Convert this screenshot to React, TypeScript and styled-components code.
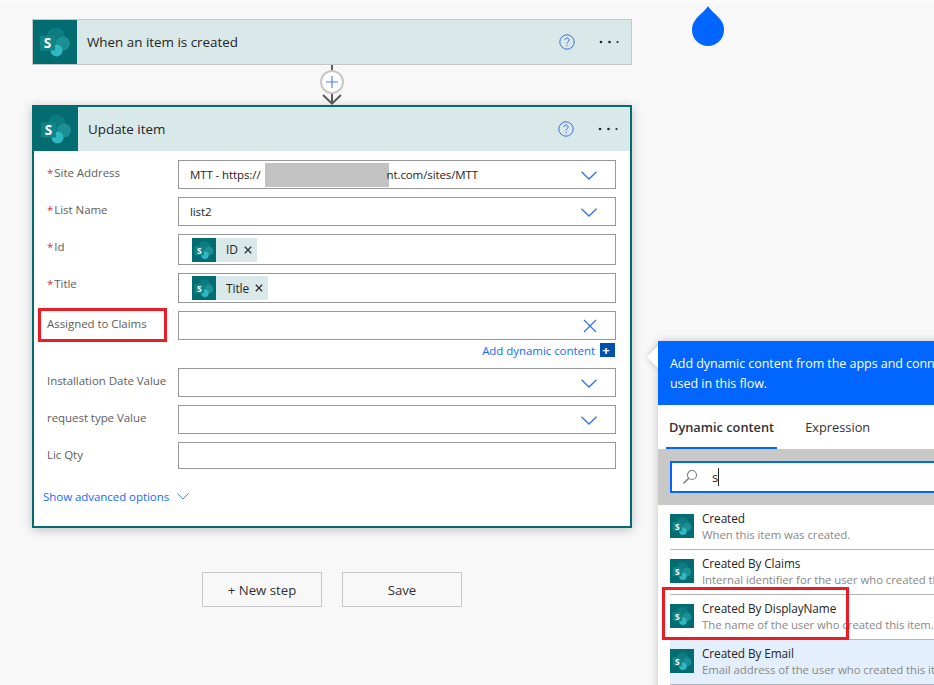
import React from "react";
import styled, { createGlobalStyle } from "styled-components";

const Global = createGlobalStyle`
  html, body { margin: 0; padding: 0; height: 685px; overflow: hidden; background: #f8f8f8; }
  * { box-sizing: border-box; }
  body { font-family: "Open Sans", "Noto Sans", "Liberation Sans", sans-serif; }
`;

const Page = styled.div`
  position: relative;
  width: 934px;
  height: 685px;
  overflow: hidden;
  background: #f8f8f8;
  border-top: 3px solid #fbfbfb;
  padding: 16px 0 0 32px;
`;
const Canvas = styled.div`
  width: 600px;
  display: flex;
  flex-direction: column;
  align-items: center;
`;
const TriggerCard = styled.div`
  width: 100%;
  height: 46px;
  display: flex;
  align-items: stretch;
  border: 1px solid #c4c8c8;
  background: #d9e8e8;
`;
const UpdateCard = styled.div`
  width: 100%;
  height: 423px;
  background: #fff;
  border: 2px solid #036c70;
  box-shadow: 0 2px 10px rgba(0, 0, 0, 0.22);
  display: flex;
  flex-direction: column;
`;
const Header = styled.div`
  height: 44px;
  flex: none;
  display: flex;
  align-items: stretch;
  background: #d9e8e8;
`;
const LogoCell = styled.div`
  width: 44px;
  flex: none;
  background: #036c70;
  display: flex;
  align-items: center;
  justify-content: center;
`;
const HeaderTitle = styled.div`
  flex: 1;
  align-self: center;
  margin-left: 10px;
  font-size: 13.4px;
  color: #252423;
`;
const HeaderActions = styled.div`
  display: flex;
  align-items: center;
  gap: 24px;
  padding-right: 12px;
`;
const Connector = styled.div`
  height: 40px;
  width: 30px;
  display: flex;
  flex-direction: column;
  align-items: center;
`;
const ConnectorStem = styled.div`
  width: 2px;
  height: 5px;
  background: #605e5c;
`;
const PlusCircle = styled.div`
  width: 24px;
  height: 24px;
  border-radius: 50%;
  background: #fff;
  border: 2px solid #c8c8c8;
  display: flex;
  align-items: center;
  justify-content: center;
`;
const FormBody = styled.div`
  flex: 1;
  padding: 9px 14px 0 13px;
  display: flex;
  flex-direction: column;
`;
const Row = styled.div<{ $gap?: number }>`
  display: grid;
  grid-template-columns: 131px 438px;
  margin-bottom: ${(p) => p.$gap ?? 8}px;
`;
const Label = styled.div<{ $top?: number }>`
  font-size: 11.5px;
  color: #605e5c;
  padding-top: ${(p) => p.$top ?? 5}px;
  line-height: 16px;
  white-space: nowrap;
  letter-spacing: -0.05px;
`;
const Star = styled.span`
  color: #d13438;
  margin-right: 1px;
`;
const Box = styled.div<{ $h: number }>`
  height: ${(p) => p.$h}px;
  border: 1px solid #979797;
  background: #fff;
  display: flex;
  align-items: center;
  justify-content: space-between;
  padding: 0 18px 0 11px;
  font-size: 11.5px;
  color: #252423;
  letter-spacing: -0.1px;
`;
const BoxValue = styled.span`
  display: inline-flex;
  align-items: center;
  white-space: nowrap;
`;
const Redact = styled.span`
  display: inline-block;
  width: 124px;
  height: 24px;
  margin: 0 -2px 0 4px;
  background: #c2c2c2;
`;
const ChevronSlot = styled.span`
  display: inline-flex;
  padding-top: 2px;
`;
const Token = styled.div`
  height: 24px;
  margin-left: 2px;
  display: inline-flex;
  align-items: center;
  background: #d9e8e8;
  font-size: 12px;
  color: #252423;
`;
const TokenIcon = styled.div`
  width: 24px;
  height: 24px;
  background: #036c70;
  display: flex;
  align-items: center;
  justify-content: center;
`;
const TokenText = styled.span`
  margin-left: 10px;
`;
const TokenClose = styled.span`
  margin: 0 5px 0 6px;
  display: inline-flex;
`;
const AddLine = styled.div`
  display: flex;
  justify-content: flex-end;
  align-items: center;
  gap: 5px;
  height: 14px;
  margin: 3px 0 11px;
  width: 569px;
`;
const LinkText = styled.span`
  font-size: 11.5px;
  color: #0f6cff;
  letter-spacing: -0.05px;
  white-space: nowrap;
`;
const AddBadge = styled.div`
  width: 16px;
  height: 14px;
  background: #0050ac;
  display: flex;
  align-items: center;
  justify-content: center;
  padding-right: 3px;
  border-right: 1px solid #fff;
  color: #fff;
  font-size: 13px;
  font-weight: 700;
  line-height: 14px;
`;
const Advanced = styled.div`
  display: flex;
  align-items: center;
  gap: 8px;
  margin: 20px 0 0 -4px;
`;
const Buttons = styled.div`
  display: flex;
  gap: 20px;
  margin-top: 44px;
`;
const StepButton = styled.div`
  width: 120px;
  height: 35px;
  border: 1px solid #c8c8c8;
  background: #f8f8f8;
  display: flex;
  align-items: center;
  justify-content: center;
  padding-top: 1px;
  font-size: 13.2px;
  color: #323130;
`;
const Drop = styled.svg`
  position: absolute;
  left: 692px;
  top: 3px;
`;
const Highlight = styled.div<{ $l: number; $t: number; $w: number; $h: number }>`
  position: absolute;
  z-index: 2;
  left: ${(p) => p.$l}px;
  top: ${(p) => p.$t}px;
  width: ${(p) => p.$w}px;
  height: ${(p) => p.$h}px;
  border: 3px solid #ed1c24;
  pointer-events: none;
`;
const Panel = styled.div`
  position: absolute;
  z-index: 1;
  left: 658px;
  top: 338px;
  width: 345px;
  height: 360px;
  background: #fff;
  box-shadow: 0 0 8px rgba(0, 0, 0, 0.22);
`;
const PanelArrow = styled.div`
  position: absolute;
  z-index: -1;
  left: -8px;
  top: 8px;
  width: 16px;
  height: 16px;
  background: #fff;
  transform: rotate(45deg);
  box-shadow: 0 0 6px rgba(0, 0, 0, 0.2);
`;
const PanelBanner = styled.div`
  height: 64px;
  background: #0066ff;
  color: #fff;
  font-size: 12.5px;
  line-height: 20px;
  padding: 13px 30px 0 12px;
  letter-spacing: -0.05px;
`;
const Tabs = styled.div`
  height: 44px;
  display: flex;
  background: #fff;
  padding-left: 8px;
  gap: 25px;
`;
const Tab = styled.div<{ $active?: boolean }>`
  height: 44px;
  padding: 13px 3px 0;
  font-size: 12.8px;
  font-weight: ${(p) => (p.$active ? 600 : 400)};
  color: #323130;
  border-bottom: 2px solid ${(p) => (p.$active ? "#0066ff" : "transparent")};
  white-space: nowrap;
`;
const SearchArea = styled.div`
  height: 56px;
  background: #c8c9c7;
  padding: 12px 0 0 12px;
`;
const SearchInput = styled.div`
  height: 32px;
  background: #fff;
  border: 2px solid #0066ff;
  display: flex;
  align-items: center;
  padding-left: 10px;
  font-size: 13px;
  color: #252423;
`;
const SearchText = styled.span`
  margin-left: 14px;
  border-right: 1px solid #252423;
  height: 18px;
  line-height: 18px;
`;
const List = styled.div`
  padding-left: 12px;
  background: #fff;
`;
const Item = styled.div<{ $hover?: boolean }>`
  height: 45px;
  display: flex;
  gap: 8px;
  padding-top: 9px;
  border-bottom: 1px solid #b5b5b5;
  background: ${(p) => (p.$hover ? "#e3effc" : "#fff")};
`;
const ItemIcon = styled.div`
  width: 24px;
  height: 24px;
  flex: none;
  background: #036c70;
  display: flex;
  align-items: center;
  justify-content: center;
`;
const ItemText = styled.div`
  display: flex;
  flex-direction: column;
  gap: 1px;
  white-space: nowrap;
  margin-top: -4px;
`;
const ItemTitle = styled.div`
  font-size: 11.8px;
  line-height: 16px;
  color: #252423;
  letter-spacing: -0.08px;
`;
const ItemDesc = styled.div`
  font-size: 11.4px;
  line-height: 16px;
  color: #8a8886;
  letter-spacing: -0.06px;
`;

const SpLogo = ({ size }: { size: number }) => (
  <svg width={size} height={size} viewBox="0 0 32 32">
    <circle cx="17" cy="10.5" r="9" fill="#0c7c80" />
    <circle cx="24" cy="17.5" r="7" fill="#1a8f94" />
    <circle cx="17.5" cy="24.5" r="6" fill="#2fb8c2" />
    <rect x="1" y="9.5" width="15" height="15" rx="1" fill="#118488" />
    <text x="8.5" y="22" textAnchor="middle" fontSize="13.5" fontWeight="700" fill="#fff" fontFamily="Open Sans, sans-serif">S</text>
  </svg>
);
const Help = () => (
  <svg width="16" height="16" viewBox="0 0 16 16" fill="none" stroke="#3f6fe8" strokeWidth="1">
    <circle cx="8" cy="8" r="7.2" />
    <path d="M5.9 6.1c0-1.3 1-2.1 2.1-2.1s2.1.8 2.1 2c0 1.900-2.100 1.700-2.100 3.700" />
    <path d="M8 11v1.200" />
  </svg>
);
const More = () => (
  <svg width="20" height="4" viewBox="0 0 20 4" fill="#252423">
    <circle cx="2" cy="2" r="1.300" />
    <circle cx="10.500" cy="2" r="1.300" />
    <circle cx="18.500" cy="2" r="1.100" />
  </svg>
);
const Chevron = () => (
  <ChevronSlot>
    <svg width="16" height="9" viewBox="0 0 16 9" fill="none" stroke="#2f6fe8" strokeWidth="1.300">
      <path d="M.5 .8 8 8 15.500 .8" />
    </svg>
  </ChevronSlot>
);
const SmallChevron = () => (
  <svg width="12" height="7" viewBox="0 0 12 7" fill="none" stroke="#3f7cf0" strokeWidth="1">
    <path d="M.5 .5 6 6 11.500 .5" />
  </svg>
);
const Cross = () => (
  <svg width="14" height="14" viewBox="0 0 14 14" fill="none" stroke="#2f6fe8" strokeWidth="1.200">
    <path d="M1 1 13 13M13 1 1 13" />
  </svg>
);
const TokenX = () => (
  <svg width="8" height="8" viewBox="0 0 8 8" fill="none" stroke="#323130" strokeWidth="1.300">
    <path d="M.8 .8 7.200 7.200M7.200 .8 .8 7.200" />
  </svg>
);
const SearchIcon = () => (
  <svg width="16" height="16" viewBox="0 0 16 16" fill="none" stroke="#7a7a7a" strokeWidth="1.100">
    <circle cx="10" cy="6" r="4.500" />
    <path d="M6.800 9.200 1.500 14.500" strokeWidth="1.500" />
  </svg>
);

const items = [
  ["Created", "When this item was created."],
  ["Created By Claims", "Internal identifier for the user who created this item."],
  ["Created By DisplayName", "The name of the user who created this item."],
  ["Created By Email", "Email address of the user who created this item."],
];

export default function App() {
  return (
    <Page>
      <Global />
      <Canvas>
        <TriggerCard>
          <LogoCell><SpLogo size={32} /></LogoCell>
          <HeaderTitle>When an item is created</HeaderTitle>
          <HeaderActions><Help /><More /></HeaderActions>
        </TriggerCard>
        <Connector>
          <ConnectorStem />
          <PlusCircle>
            <svg width="14" height="14" viewBox="0 0 14 14" stroke="#4f86e8" strokeWidth="1.200">
              <path d="M7 1v12M1 7h12" />
            </svg>
          </PlusCircle>
          <svg width="20" height="11" viewBox="0 0 20 11" fill="none" stroke="#5c5c5c" strokeWidth="2">
            <path d="M1 1 10 9.500 19 1M10 0v9" />
          </svg>
        </Connector>
        <UpdateCard>
          <Header>
            <LogoCell><SpLogo size={32} /></LogoCell>
            <HeaderTitle>Update item</HeaderTitle>
            <HeaderActions><Help /><More /></HeaderActions>
          </Header>
          <FormBody>
            <Row>
              <Label><Star>*</Star>Site Address</Label>
              <Box $h={29}>
                <BoxValue>MTT - https://<Redact />nt.com/sites/MTT</BoxValue>
                <Chevron />
              </Box>
            </Row>
            <Row>
              <Label><Star>*</Star>List Name</Label>
              <Box $h={29}><BoxValue>list2</BoxValue><Chevron /></Box>
            </Row>
            <Row>
              <Label><Star>*</Star>Id</Label>
              <Box $h={31}>
                <Token>
                  <TokenIcon><SpLogo size={20} /></TokenIcon>
                  <TokenText>ID</TokenText>
                  <TokenClose><TokenX /></TokenClose>
                </Token>
              </Box>
            </Row>
            <Row>
              <Label $top={3}><Star>*</Star>Title</Label>
              <Box $h={30}>
                <Token>
                  <TokenIcon><SpLogo size={20} /></TokenIcon>
                  <TokenText>Title</TokenText>
                  <TokenClose><TokenX /></TokenClose>
                </Token>
              </Box>
            </Row>
            <Row $gap={0}>
              <Label>Assigned to Claims</Label>
              <Box $h={29}><span /><Cross /></Box>
            </Row>
            <AddLine>
              <LinkText>Add dynamic content</LinkText>
              <AddBadge>+</AddBadge>
            </AddLine>
            <Row>
              <Label>Installation Date Value</Label>
              <Box $h={29}><span /><Chevron /></Box>
            </Row>
            <Row>
              <Label>request type Value</Label>
              <Box $h={29}><span /><Chevron /></Box>
            </Row>
            <Row $gap={0}>
              <Label>Lic Qty</Label>
              <Box $h={27} />
            </Row>
            <Advanced>
              <LinkText>Show advanced options</LinkText>
              <SmallChevron />
            </Advanced>
          </FormBody>
        </UpdateCard>
        <Buttons>
          <StepButton>+ New step</StepButton>
          <StepButton>Save</StepButton>
        </Buttons>
      </Canvas>
      <Drop width="32" height="40" viewBox="0 0 32 40">
        <path d="M16 0 C18 4 24 8 28 13 C31 16.500 32 20 32 24 A16 16 0 0 1 0 24 C0 20 1 16.500 4 13 C8 8 14 4 16 0Z" fill="#0066ff" />
      </Drop>
      <Panel>
        <PanelArrow />
        <PanelBanner>Add dynamic content from the apps and connectors used in this flow.</PanelBanner>
        <Tabs>
          <Tab $active>Dynamic content</Tab>
          <Tab>Expression</Tab>
        </Tabs>
        <SearchArea>
          <SearchInput>
            <SearchIcon />
            <SearchText>s</SearchText>
          </SearchInput>
        </SearchArea>
        <List>
          {items.map(([t, d], i) => (
            <Item key={t} $hover={i === 3}>
              <ItemIcon><SpLogo size={20} /></ItemIcon>
              <ItemText>
                <ItemTitle>{t}</ItemTitle>
                <ItemDesc>{d}</ItemDesc>
              </ItemText>
            </Item>
          ))}
        </List>
      </Panel>
      <Highlight $l={38} $t={305} $w={129} $h={34} />
      <Highlight $l={662} $t={584} $w={187} $h={53} />
    </Page>
  );
}
